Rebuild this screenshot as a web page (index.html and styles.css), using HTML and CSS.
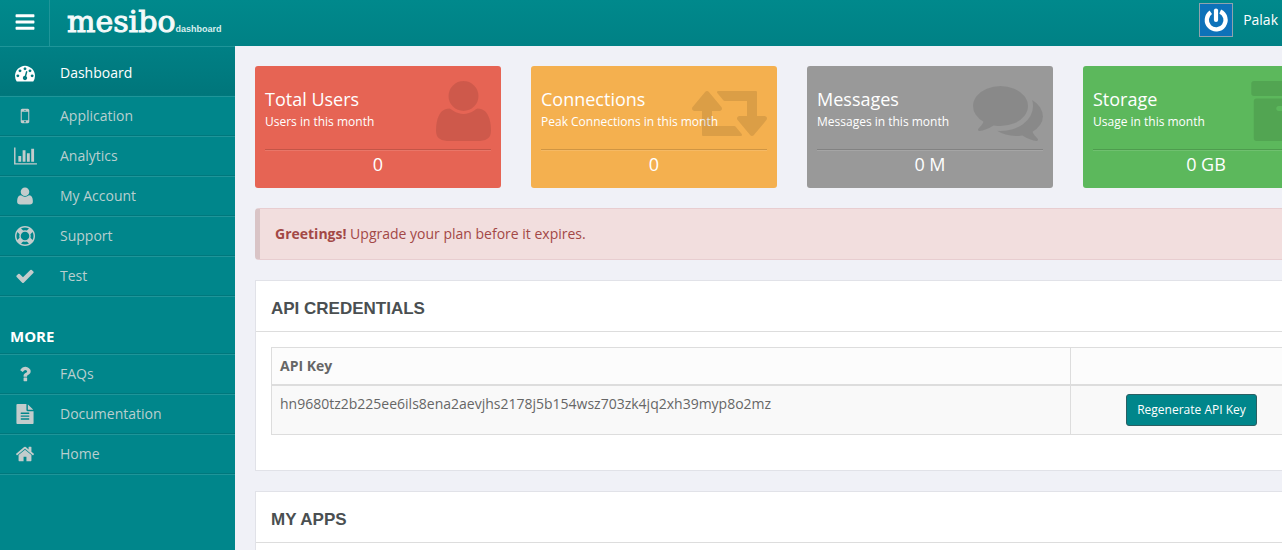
FILE: index.html
```html
<!DOCTYPE html>
<html lang="en">
<head>
<meta charset="utf-8">
<title>mesibo dashboard</title>
<link rel="stylesheet" href="styles.css">
</head>
<body>
<div class="page">
  <header class="topbar">
    <button class="menu-toggle" type="button" aria-label="Toggle menu">
      <svg viewBox="0 0 1792 1792" width="22" height="22"><path d="M1664 1344v128q0 26-19 45t-45 19h-1408q-26 0-45-19t-19-45v-128q0-26 19-45t45-19h1408q26 0 45 19t19 45zm0-512v128q0 26-19 45t-45 19h-1408q-26 0-45-19t-19-45v-128q0-26 19-45t45-19h1408q26 0 45 19t19 45zm0-512v128q0 26-19 45t-45 19h-1408q-26 0-45-19t-19-45v-128q0-26 19-45t45-19h1408q26 0 45 19t19 45z"/></svg>
    </button>
    <a class="brand" href="#"><span class="brand-name">mesibo</span><span class="brand-sub">dashboard</span></a>
    <a class="user-menu" href="#">
      <svg class="avatar" viewBox="0 0 34 34" width="34" height="34"><rect x="0.5" y="0.5" width="33" height="33" fill="#0d72b9" stroke="#8fa3ae"/><path d="M11.800 9.300a9.400 9.400 0 1 0 9.400-.8" fill="none" stroke="#fff" stroke-width="4.200"/><path d="M17 7.500v9.500" fill="none" stroke="#fff" stroke-width="4.200" stroke-linecap="round"/></svg>
      <span>Palak</span>
    </a>
  </header>
  <div class="body">
    <nav class="sidebar">
      <ul class="nav">
        <li><a class="nav-link active" href="#"><span class="nav-icon"><svg viewBox="0 0 1792 1792" width="20" height="20"><path d="M384 1152q0-53-37.500-90.500t-90.500-37.500-90.500 37.500-37.500 90.500 37.500 90.500 90.500 37.500 90.500-37.500 37.500-90.500zm192-448q0-53-37.500-90.500t-90.500-37.500-90.500 37.500-37.500 90.500 37.500 90.500 90.500 37.500 90.500-37.500 37.500-90.500zm428 481l101-382q6-26-7.500-48.500t-38.500-29.500-48 6.500-30 39.500l-101 382q-60 5-107 43.500t-63 98.500q-20 77 20 146t117 89 146-20 89-117q16-60-6-117t-72-91zm660-33q0-53-37.500-90.500t-90.500-37.500-90.500 37.500-37.500 90.500 37.500 90.500 90.500 37.500 90.500-37.500 37.500-90.500zm-640-640q0-53-37.500-90.500t-90.500-37.500-90.500 37.500-37.500 90.500 37.500 90.500 90.500 37.500 90.500-37.500 37.500-90.500zm448 192q0-53-37.500-90.500t-90.500-37.500-90.500 37.500-37.500 90.500 37.500 90.500 90.500 37.500 90.500-37.500 37.500-90.500zm320 448q0 261-141 483-19 29-54 29h-1402q-35 0-54-29-141-221-141-483 0-182 71-348t191-286 286-191 348-71 348 71 286 191 191 286 71 348z"/></svg></span>Dashboard</a></li>
        <li><a class="nav-link" href="#"><span class="nav-icon"><svg viewBox="0 0 1792 1792" width="20" height="20"><path d="M976 1408q0-33-23.500-56.500t-56.500-23.500-56.500 23.500-23.500 56.500 23.500 56.500 56.500 23.500 56.500-23.500 23.500-56.500zm208-160v-704q0-13-9.500-22.500t-22.500-9.500h-512q-13 0-22.500 9.500t-9.500 22.500v704q0 13 9.500 22.500t22.500 9.500h512q13 0 22.500-9.500t9.500-22.500zm-192-848q0-16-16-16h-160q-16 0-16 16t16 16h160q16 0 16-16zm288-16v1024q0 52-38 90t-90 38h-512q-52 0-90-38t-38-90v-1024q0-52 38-90t90-38h512q52 0 90 38t38 90z"/></svg></span>Application</a></li>
        <li><a class="nav-link" href="#"><span class="nav-icon"><svg viewBox="0 0 2048 1792" width="23" height="20"><path d="M640 896v512h-256v-512h256zm384-512v1024h-256v-1024h256zm1024 1152v128h-2048v-1536h128v1408h1920zm-640-896v768h-256v-768h256zm384-384v1152h-256v-1152h256z"/></svg></span>Analytics</a></li>
        <li><a class="nav-link" href="#"><span class="nav-icon"><svg viewBox="0 0 1408 1792" width="16" height="20"><use href="#person"/></svg></span>My Account</a></li>
        <li><a class="nav-link" href="#"><span class="nav-icon"><svg viewBox="0 0 1792 1792" width="20" height="20"><path d="M896 0q182 0 348 71t286 191 191 286 71 348-71 348-191 286-286 191-348 71-348-71-286-191-191-286-71-348 71-348 191-286 286-191 348-71zm0 128q-190 0-361 90l194 194q82-28 167-28t167 28l194-194q-171-90-361-90zm-678 1129l194-194q-28-82-28-167t28-167l-194-194q-90 171-90 361t90 361zm678 407q190 0 361-90l-194-194q-82 28-167 28t-167-28l-194 194q171 90 361 90zm0-384q159 0 271.500-112.500t112.500-271.500-112.500-271.500-271.500-112.500-271.500 112.500-112.500 271.500 112.500 271.500 271.500 112.500zm484-217l194 194q90-171 90-361t-90-361l-194 194q28 82 28 167t-28 167z"/></svg></span>Support</a></li>
        <li><a class="nav-link" href="#"><span class="nav-icon"><svg viewBox="0 0 1792 1792" width="20" height="20"><path d="M1671 566q0 40-28 68l-724 724-136 136q-28 28-68 28t-68-28l-136-136-362-362q-28-28-28-68t28-68l136-136q28-28 68-28t68 28l294 295 656-657q28-28 68-28t68 28l136 136q28 28 28 68z"/></svg></span>Test</a></li>
      </ul>
      <h2 class="nav-title">MORE</h2>
      <ul class="nav">
        <li><a class="nav-link" href="#"><span class="nav-icon"><svg viewBox="0 0 1792 1792" width="20" height="20"><path d="M1088 1256v240q0 16-12 28t-28 12h-240q-16 0-28-12t-12-28v-240q0-16 12-28t28-12h240q16 0 28 12t12 28zm316-600q0 54-15.500 101t-35 76.500-55 59.500-57.500 43.500-61 35.500q-41 23-68.500 65t-27.500 67q0 17-12 32.500t-28 15.500h-240q-15 0-25.500-18.500t-10.500-37.500v-45q0-83 65-156.500t143-108.500q59-27 84-56t25-76q0-42-46.500-74t-107.500-32q-65 0-108 29-35 25-107 115-13 16-31 16-12 0-25-8l-164-125q-13-10-15.500-25t5.500-28q160-266 464-266 80 0 161 31t146 83 106 127.500 41 158.500z"/></svg></span>FAQs</a></li>
        <li><a class="nav-link" href="#"><span class="nav-icon"><svg viewBox="0 0 1792 1792" width="20" height="20"><path d="M1596 476q14 14 28 36h-472v-472q22 14 36 28zm-476 164h544v1056q0 40-28 68t-68 28h-1344q-40 0-68-28t-28-68v-1600q0-40 28-68t68-28h800v544q0 40 28 68t68 28zm160 736v-64q0-14-9-23t-23-9h-704q-14 0-23 9t-9 23v64q0 14 9 23t23 9h704q14 0 23-9t9-23zm0-256v-64q0-14-9-23t-23-9h-704q-14 0-23 9t-9 23v64q0 14 9 23t23 9h704q14 0 23-9t9-23zm0-256v-64q0-14-9-23t-23-9h-704q-14 0-23 9t-9 23v64q0 14 9 23t23 9h704q14 0 23-9t9-23z"/></svg></span>Documentation</a></li>
        <li><a class="nav-link" href="#"><span class="nav-icon"><svg viewBox="0 0 1792 1792" width="20" height="20"><path d="M1472 992v480q0 26-19 45t-45 19h-384v-384h-256v384h-384q-26 0-45-19t-19-45v-480q0-1 .5-3t.5-3l575-474 575 474q1 2 1 6zm223-69l-62 74q-8 9-21 11h-3q-13 0-21-7l-692-577-692 577q-12 8-24 7-13-2-21-11l-62-74q-8-10-7-23.500t11-21.500l719-599q32-26 76-26t76 26l244 204v-195q0-14 9-23t23-9h192q14 0 23 9t9 23v408l219 182q10 8 11 21.500t-7 23.500z"/></svg></span>Home</a></li>
      </ul>
    </nav>
    <main class="content">
      <section class="cards">
        <article class="card card-red">
          <h3 class="card-title">Total Users</h3>
          <p class="card-sub">Users in this month</p>
          <p class="card-value">0</p>
          <svg class="card-icon" viewBox="0 0 1408 1792" width="55" height="70"><path id="person" transform="matrix(1 0 0 -1 0 1536)" d="M1408 131q0 -120 -73 -189.500t-194 -69.500h-874q-121 0 -194 69.500t-73 189.500q0 53 3.500 103.500t14 109t26.500 108.500t43 97.500t62 81t85.500 53.500t111.500 20q9 0 42 -21.500t74.500 -48t108 -48t133.500 -21.500t133.500 21.500t108 48t74.500 48t42 21.500q61 0 111.500 -20t85.500 -53.500t62 -81t43 -97.500t26.500 -108.500t14 -109t3.500 -103.500zM1088 1024q0 -159 -112.500 -271.500t-271.500 -112.500t-271.500 112.500t-112.500 271.500t112.500 271.500t271.500 112.500t271.500 -112.500t112.500 -271.500z"/></svg>
        </article>
        <article class="card card-orange">
          <h3 class="card-title">Connections</h3>
          <p class="card-sub">Peak Connections in this month</p>
          <p class="card-value">0</p>
          <svg class="card-icon" viewBox="0 0 1920 1792" width="75" height="70"><path transform="matrix(1 0 0 -1 0 1536)" d="M1280 32q0 -13 -9.500 -22.500t-22.500 -9.500h-960q-8 0 -13.500 2t-9 7t-5.500 8t-3 11.500t-1 11.500v13v11v160v416h-192q-26 0 -45 19t-19 45q0 24 15 41l320 384q19 22 49 22t49 -22l320 -384q15 -17 15 -41q0 -26 -19 -45t-45 -19h-192v-384h576q16 0 25 -11l160 -192q7 -11 7 -21zM1920 448q0 -24 -15 -41l-320 -384q-20 -23 -49 -23t-49 23l-320 384q-15 17 -15 41q0 26 19 45t45 19h192v384h-576q-16 0 -25 12l-160 192q-7 9 -7 20q0 13 9.500 22.500t22.500 9.500h960q8 0 13.500 -2t9 -7t5.500 -8t3 -11.500t1 -11.500v-13v-11v-160v-416h192q26 0 45 -19t19 -45z"/></svg>
        </article>
        <article class="card card-gray">
          <h3 class="card-title">Messages</h3>
          <p class="card-sub">Messages in this month</p>
          <p class="card-value">0 M</p>
          <svg class="card-icon" viewBox="0 0 1792 1792" width="70" height="70"><path d="M1408 768q0 139-94 257t-256.500 186.500-353.500 68.500q-86 0-176-16-124 88-278 128-36 9-86 16h-3q-11 0-20.500-8t-11.500-21q-1-3-1-6.500t.5-6.500 2-6l2.500-5 3.500-5.500 4-5 4.500-5 4-4.500q5-6 23-25t26-29.500 22.500-29 25-38.500 20.500-44q-124-72-195-177t-71-224q0-139 94-257t256.500-186.500 353.500-68.500 353.500 68.500 256.500 186.500 94 257zm384 256q0 120-71 224.500t-195 176.500q10 24 20.500 44t25 38.500 22.500 29 26 29.500 23 25q1 1 4 4.500t4.500 5 4 5 3.500 5.500l2.500 5 2 6 .5 6.500-1 6.500q-3 14-13 22t-22 7q-50-7-86-16-154-40-278-128-90 16-176 16-271 0-472-132 58 4 88 4 161 0 309-45t264-129q125-92 192-212t67-254q0-77-23-152 129 71 204 187t75 250z"/></svg>
        </article>
        <article class="card card-green">
          <h3 class="card-title">Storage</h3>
          <p class="card-sub">Usage in this month</p>
          <p class="card-value">0 GB</p>
          <svg class="card-icon" viewBox="64 0 1728 1792" width="68" height="70"><path d="M1088 832q0-26-19-45t-45-19h-256q-26 0-45 19t-19 45 19 45 45 19h256q26 0 45-19t19-45zm576-192v960q0 26-19 45t-45 19h-1408q-26 0-45-19t-19-45v-960q0-26 19-45t45-19h1408q26 0 45 19t19 45zm64-448v256q0 26-19 45t-45 19h-1536q-26 0-45-19t-19-45v-256q0-26 19-45t45-19h1536q26 0 45 19t19 45z"/></svg>
        </article>
      </section>
      <p class="alert"><strong>Greetings!</strong> Upgrade your plan before it expires.</p>
      <section class="panel">
        <h2 class="panel-title">API CREDENTIALS</h2>
        <div class="panel-body">
          <table class="keys">
            <thead><tr><th>API Key</th><th class="action"></th></tr></thead>
            <tbody><tr><td>hn9680tz2b225ee6ils8ena2aevjhs2178j5b154wsz703zk4jq2xh39myp8o2mz</td><td class="action"><button class="btn" type="button">Regenerate API Key</button></td></tr></tbody>
          </table>
        </div>
      </section>
      <section class="panel">
        <h2 class="panel-title">MY APPS</h2>
        <div class="panel-body"></div>
      </section>
    </main>
  </div>
</div>
</body>
</html>
```
FILE: styles.css
```css
* { box-sizing: border-box; }
html { overflow: hidden; }
body {
  margin: 0;
  background: #f0f1f7;
  color: #666;
  font: 14px/20px "Open Sans", "Noto Sans", sans-serif;
}
h2, h3, p, ul { margin: 0; padding: 0; }
ul { list-style: none; }
a { color: inherit; text-decoration: none; }
svg { display: block; fill: currentColor; }

.page {
  display: flex;
  flex-direction: column;
  min-width: 1349px;
  min-height: 100vh;
}

.topbar {
  display: flex;
  height: 46px;
  background: linear-gradient(#00898c, #008185);
  color: #fff;
}
.menu-toggle {
  display: flex;
  align-items: center;
  justify-content: center;
  width: 50px;
  padding: 0 0 3px;
  border: 0;
  border-right: 1px solid #1f9599;
  background: none;
  color: #fff;
}
.brand {
  display: flex;
  align-items: baseline;
  padding-left: 17px;
  line-height: 44px;
}
.brand-name {
  color: #f4fafa;
  font-family: "DejaVu Serif", serif;
  font-size: 30px;
  -webkit-text-stroke: 1px #f4fafa;
}
.brand-sub {
  color: #d9efef;
  font-family: "Liberation Sans", Arial, sans-serif;
  font-size: 9px;
  font-weight: bold;
}
.user-menu {
  display: flex;
  align-items: center;
  gap: 10px;
  margin-left: auto;
  padding: 0 71px 6px 0;
}

.body { display: flex; flex: 1; }
.sidebar {
  flex: none;
  width: 235px;
  background: #00868b;
  color: #b9cfcf;
}
.nav { border-bottom: 1px solid #1f9599; }
.nav-link {
  display: flex;
  align-items: center;
  height: 40px;
  border-top: 1px solid #1f9599;
  border-bottom: 1px solid #00787d;
}
.nav-link.active {
  height: 50px;
  padding-top: 4px;
  background: linear-gradient(#008085, #00767b);
  color: #fff;
}
.nav-icon {
  display: flex;
  justify-content: center;
  width: 50px;
  margin-right: 10px;
  color: #c3cccc;
}
.active .nav-icon { color: #fff; }
.nav-title {
  padding: 29px 10px 7px;
  border-bottom: 1px solid #00787d;
  color: #fff;
  font-size: 15px;
  line-height: 20px;
}

.content { flex: 1; padding: 20px; }
.cards {
  display: grid;
  grid-template-columns: repeat(4, 1fr);
  gap: 30px;
}
.card {
  position: relative;
  height: 122px;
  padding: 20px 10px 10px;
  border-radius: 3px;
  color: #fff;
}
.card-red { background: #e66454; }
.card-orange { background: #f4b04f; }
.card-gray { background: #999; }
.card-green { background: #5cb85c; }
.card-title { font-size: 18px; font-weight: 400; line-height: 26px; }
.card-sub {
  height: 37px;
  font-size: 12px;
  line-height: 20px;
}
.card-value {
  border-top: 1px solid rgba(0, 0, 0, 0.15);
  box-shadow: inset 0 1px rgba(255, 255, 255, 0.12);
  font-size: 18px;
  line-height: 28px;
  text-align: center;
}
.card-icon {
  position: absolute;
  top: 10px;
  right: 10px;
  color: rgba(0, 0, 0, 0.1);
}

.alert {
  margin: 20px 0;
  padding: 15px;
  border: 1px solid #e8cdd0;
  border-left: 5px solid #d9c4c6;
  border-radius: 4px;
  background: #f2dede;
  color: #a34846;
}
.panel {
  margin-bottom: 20px;
  border: 1px solid #e1e2e8;
  background: #fff;
}
.panel-title {
  padding: 18px 15px 12px;
  border-bottom: 1px solid #ddd;
  color: #4a4f51;
  font: bold 17px/20px "Liberation Sans", Arial, sans-serif;
}
.panel-body { min-height: 138px; padding: 15px; }

.keys {
  width: 100%;
  border: 1px solid #ddd;
  border-collapse: collapse;
}
.keys th, .keys td {
  padding: 8px;
  border: 1px solid #ddd;
  text-align: left;
  vertical-align: top;
}
.keys th { border-bottom-width: 2px; background: #fcfcfc; }
.keys td { background: #f9f9f9; }
.keys .action { width: 242px; text-align: center; }
.btn {
  height: 32px;
  padding: 0 10px;
  border: 1px solid #2b5f63;
  border-radius: 3px;
  background: #00868b;
  color: #fff;
  font: 12px/18px "Open Sans", "Noto Sans", sans-serif;
}
```
